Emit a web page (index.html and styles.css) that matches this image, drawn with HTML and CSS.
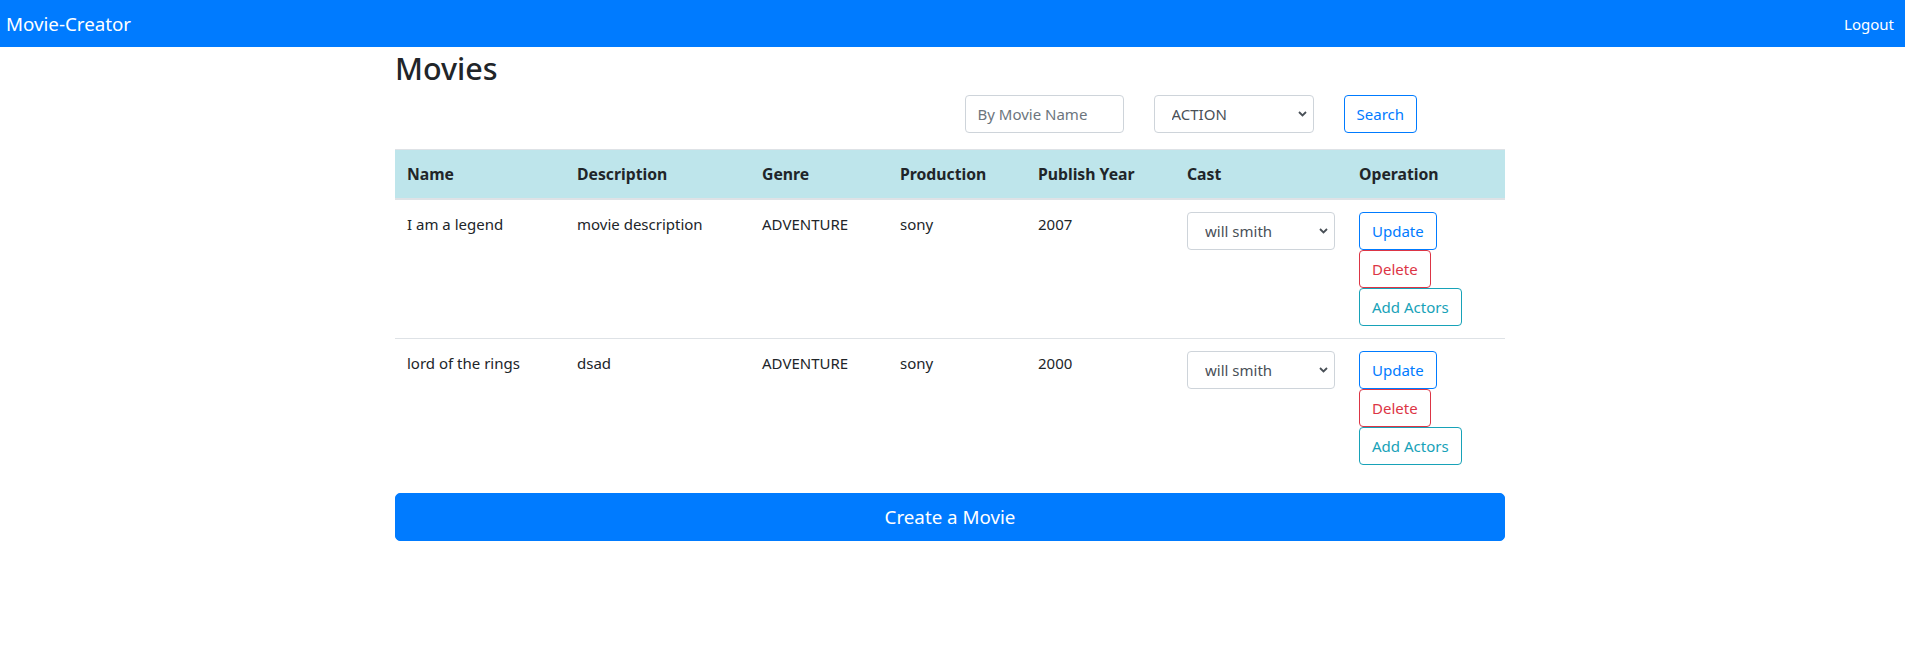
FILE: index.html
```html
<!DOCTYPE html>
<html lang="en">
<head>
<meta charset="utf-8">
<title>Movie-Creator</title>
<link rel="stylesheet" href="styles.css">
</head>
<body>
<nav class="navbar">
  <a class="brand" href="#">Movie-Creator</a>
  <a class="nav-link" href="#">Logout</a>
</nav>
<div class="page">
  <div class="container">
    <h2 class="title">Movies</h2>
    <form class="search-row">
      <input class="form-control search-input" type="text" placeholder="By Movie Name">
      <select class="form-control select genre-select">
        <option>ACTION</option>
        <option>ADVENTURE</option>
      </select>
      <button type="button" class="btn btn-outline-primary">Search</button>
    </form>
    <table class="table">
      <colgroup>
        <col class="c-name"><col class="c-desc"><col class="c-genre"><col class="c-prod"><col class="c-year"><col class="c-cast"><col class="c-op">
      </colgroup>
      <thead>
        <tr>
          <th>Name</th><th>Description</th><th>Genre</th><th>Production</th><th>Publish Year</th><th>Cast</th><th>Operation</th>
        </tr>
      </thead>
      <tbody>
        <tr>
          <td>I am a legend</td>
          <td>movie description</td>
          <td>ADVENTURE</td>
          <td>sony</td>
          <td>2007</td>
          <td><select class="form-control select cast-select"><option>will smith</option></select></td>
          <td>
            <div class="ops">
              <button type="button" class="btn btn-outline-primary">Update</button>
              <button type="button" class="btn btn-outline-danger">Delete</button>
              <button type="button" class="btn btn-outline-info">Add Actors</button>
            </div>
          </td>
        </tr>
        <tr>
          <td>lord of the rings</td>
          <td>dsad</td>
          <td>ADVENTURE</td>
          <td>sony</td>
          <td>2000</td>
          <td><select class="form-control select cast-select"><option>will smith</option></select></td>
          <td>
            <div class="ops">
              <button type="button" class="btn btn-outline-primary">Update</button>
              <button type="button" class="btn btn-outline-danger">Delete</button>
              <button type="button" class="btn btn-outline-info">Add Actors</button>
            </div>
          </td>
        </tr>
      </tbody>
    </table>
    <button type="button" class="btn btn-primary btn-lg btn-block">Create a Movie</button>
  </div>
</div>
</body>
</html>
```

FILE: styles.css
```css
* { box-sizing: border-box; }

html, body {
  margin: 0;
  background: #fff;
}

body {
  font-family: "Segoe UI", "Noto Sans", "Open Sans", sans-serif;
  font-size: 15px;
  line-height: 24px;
  color: #212529;
}

a { text-decoration: none; }

.navbar {
  height: 47px;
  background: #007bff;
  display: flex;
  align-items: center;
  justify-content: space-between;
  padding: 0 11px 0 6px;
}

.brand {
  color: #fff;
  font-size: 18.75px;
  line-height: 30px;
}

.nav-link {
  color: #fff;
  font-size: 15px;
  line-height: 24px;
}

.page {
  padding-right: 5px;
}

.container {
  max-width: 1110px;
  margin: 0 auto;
  padding-top: 2px;
}

.title {
  margin: 0 0 8px;
  font-size: 30.5px;
  font-weight: 500;
  line-height: 38px;
}

.search-row {
  display: flex;
  justify-content: flex-end;
  gap: 30px;
  padding-right: 88px;
  margin: 2px 0 16px;
}

.form-control {
  height: 38px;
  font-family: inherit;
  font-size: 15px;
  line-height: 24px;
  color: #495057;
  background-color: #fff;
  border: 1px solid #ced4da;
  border-radius: 4px;
  padding: 6px 12px;
  margin: 0;
}

.form-control::placeholder { color: #6c757d; }

.search-input { width: 159px; }

.select {
  -webkit-appearance: none;
  appearance: none;
  padding-left: 17px;
  padding-right: 26px;
  background-image: url("data:image/svg+xml,%3Csvg xmlns='http://www.w3.org/2000/svg' width='9' height='6' viewBox='0 0 9 6'%3E%3Cpath d='M1 1l3.5 3.5L8 1' fill='none' stroke='%23495057' stroke-width='1.8'/%3E%3C/svg%3E");
  background-repeat: no-repeat;
  background-position: right 6px center;
  background-size: 9px 6px;
}

.genre-select { width: 160px; }
.cast-select { width: 100%; display: block; }

.btn {
  display: inline-block;
  font-family: inherit;
  font-size: 15px;
  line-height: 24px;
  font-weight: 400;
  padding: 6px 12px;
  border: 1px solid transparent;
  border-radius: 4px;
  background: transparent;
  cursor: pointer;
  margin: 0;
  text-align: center;
}

.btn-outline-primary { color: #007bff; border-color: #007bff; }
.btn-outline-danger { color: #dc3545; border-color: #dc3545; }
.btn-outline-info { color: #17a2b8; border-color: #17a2b8; }

.btn-primary {
  color: #fff;
  background: #007bff;
  border-color: #007bff;
}

.btn-lg {
  font-size: 18.75px;
  line-height: 30px;
  padding: 8px 16px;
  border-radius: 5px;
}

.btn-block {
  display: block;
  width: 100%;
}

.table {
  width: 100%;
  border-collapse: collapse;
  table-layout: fixed;
  margin-bottom: 16px;
  color: #212529;
}

.c-name { width: 170px; }
.c-desc { width: 185px; }
.c-genre { width: 138px; }
.c-prod { width: 138px; }
.c-year { width: 149px; }
.c-cast { width: 172px; }
.c-op { width: 158px; }

.table th,
.table td {
  padding: 12px;
  text-align: left;
  border-top: 1px solid #dee2e6;
}

.table th {
  background: #bee5eb;
  font-size: 15.75px;
  font-weight: 700;
  vertical-align: bottom;
  border-bottom: 2px solid #dee2e6;
  white-space: nowrap;
}

.table td {
  vertical-align: top;
}

.ops {
  display: flex;
  flex-direction: column;
  align-items: flex-start;
}
```
